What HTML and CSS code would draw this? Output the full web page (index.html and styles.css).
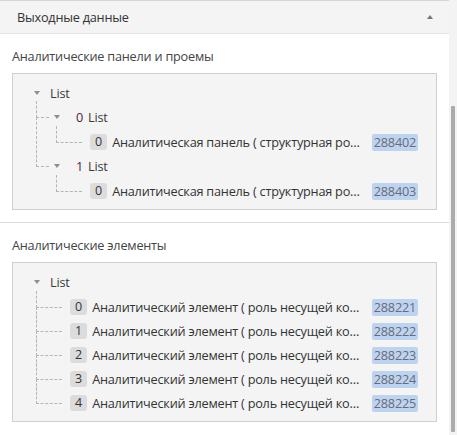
FILE: index.html
```html
<!DOCTYPE html>
<html lang="ru">
<head>
<meta charset="utf-8">
<link rel="stylesheet" href="styles.css">
</head>
<body>
<div class="app">
  <div class="main">
    <div class="acc-header">
      <span class="acc-title">Выходные данные</span>
      <span class="caret-up"></span>
    </div>

    <section class="sec">
      <div class="sec-title">Аналитические панели и проемы</div>
      <div class="box">
        <ul class="tree root">
          <li class="node">
            <div class="row"><span class="arrow"></span><span class="type">List</span></div>
            <ul class="tree">
              <li class="node">
                <div class="row"><span class="arrow"></span><span class="key">0</span><span class="type">List</span></div>
                <ul class="tree leaves">
                  <li class="leaf">
                    <div class="row"><span class="arrow none"></span><span class="idx">0</span><span class="label">Аналитическая панель ( структурная роль: несущая )</span><span class="id">288402</span></div>
                  </li>
                </ul>
              </li>
              <li class="node">
                <div class="row"><span class="arrow"></span><span class="key">1</span><span class="type">List</span></div>
                <ul class="tree leaves">
                  <li class="leaf">
                    <div class="row"><span class="arrow none"></span><span class="idx">0</span><span class="label">Аналитическая панель ( структурная роль: несущая )</span><span class="id">288403</span></div>
                  </li>
                </ul>
              </li>
            </ul>
          </li>
        </ul>
      </div>
    </section>

    <section class="sec">
      <div class="sec-title">Аналитические элементы</div>
      <div class="box">
        <ul class="tree root">
          <li class="node">
            <div class="row"><span class="arrow"></span><span class="type">List</span></div>
            <ul class="tree leaves">
              <li class="leaf">
                <div class="row"><span class="arrow none"></span><span class="idx">0</span><span class="label">Аналитический элемент ( роль несущей конструкции )</span><span class="id">288221</span></div>
              </li>
              <li class="leaf">
                <div class="row"><span class="arrow none"></span><span class="idx">1</span><span class="label">Аналитический элемент ( роль несущей конструкции )</span><span class="id">288222</span></div>
              </li>
              <li class="leaf">
                <div class="row"><span class="arrow none"></span><span class="idx">2</span><span class="label">Аналитический элемент ( роль несущей конструкции )</span><span class="id">288223</span></div>
              </li>
              <li class="leaf">
                <div class="row"><span class="arrow none"></span><span class="idx">3</span><span class="label">Аналитический элемент ( роль несущей конструкции )</span><span class="id">288224</span></div>
              </li>
              <li class="leaf">
                <div class="row"><span class="arrow none"></span><span class="idx">4</span><span class="label">Аналитический элемент ( роль несущей конструкции )</span><span class="id">288225</span></div>
              </li>
            </ul>
          </li>
        </ul>
      </div>
    </section>
  </div>
  <div class="scrollbar"><div class="thumb"></div></div>
</div>
</body>
</html>
```

FILE: styles.css
```css
* { box-sizing: border-box; }
html, body { margin: 0; padding: 0; }
body {
  background: #fff;
  font-family: "Open Sans", "Noto Sans", sans-serif;
  font-size: 12.7px;
  letter-spacing: -0.22px;
  color: #333;
  width: 457px;
  height: 435px;
  overflow: hidden;
}
.app {
  display: flex;
  height: 435px;
}
.main {
  flex: 1;
  min-width: 0;
}
.scrollbar {
  width: 8px;
  background: #f3f3f3;
  padding: 106px 2px 3px 2px;
}
.thumb {
  height: 100%;
  background: #ababab;
  border-radius: 1px;
}
.acc-header {
  height: 34px;
  background: #f4f4f4;
  border-top: 1px solid #d6d6d6;
  border-bottom: 1px solid #e4e4e4;
  display: flex;
  align-items: center;
  justify-content: space-between;
  padding: 0 16px 0 17px;
}
.acc-title { color: #333; }
.caret-up {
  width: 0;
  height: 0;
  border-left: 3.5px solid transparent;
  border-right: 3.5px solid transparent;
  border-bottom: 4px solid #777;
}
.sec {
  padding: 12px 12px 12px 12px;
  border-bottom: 1px solid #dcdcdc;
}
.sec:last-child { border-bottom: none; }
.sec-title {
  line-height: 20px;
  color: #444;
  margin-bottom: 7px;
}
.box {
  background: #f4f4f4;
  border: 1px solid #cfcfcf;
  padding: 7px 18px 6px 17px;
}
.tree {
  list-style: none;
  margin: 0;
  padding: 0 0 0 20px;
}
.tree.root { padding-left: 0; }
.tree.leaves { padding-top: 1px; }
.tree li { position: relative; }
.tree .tree > li::before {
  content: "";
  position: absolute;
  left: -14px;
  top: -4px;
  height: 16px;
  width: 12px;
  border-left: 1px dashed #b5b5b5;
  border-bottom: 1px dashed #b5b5b5;
}
.tree .tree > li.leaf::before { width: 25px; }
.tree .tree > li:not(:last-child)::after {
  content: "";
  position: absolute;
  left: -14px;
  top: 12px;
  bottom: -4px;
  border-left: 1px dashed #b5b5b5;
}
.row {
  display: flex;
  align-items: center;
  height: 24px;
  white-space: nowrap;
}
.arrow {
  flex: 0 0 14px;
  height: 24px;
  margin-right: 6px;
  display: flex;
  align-items: center;
  justify-content: center;
}
.arrow::before {
  content: "";
  width: 0;
  height: 0;
  border-left: 3.5px solid transparent;
  border-right: 3.5px solid transparent;
  border-top: 4px solid #8e8e8e;
}
.arrow.none::before { display: none; }
.type { color: #3a3a3a; }
.key {
  color: #4b1f42;
  padding-left: 6px;
  margin-right: 5px;
}
.idx {
  background: #dcdcdc;
  color: #333;
  border-radius: 3px;
  padding: 0 5px;
  line-height: 16px;
  font-size: 12.5px;
  letter-spacing: 0;
  margin-right: 5px;
}
.label {
  flex: 1;
  min-width: 0;
  overflow: hidden;
  text-overflow: ellipsis;
  color: #333;
  margin-right: 8px;
}
.id {
  background: #bdd4f1;
  color: #6a6a78;
  border-radius: 2px;
  padding: 0 2px;
  line-height: 17px;
}
```
